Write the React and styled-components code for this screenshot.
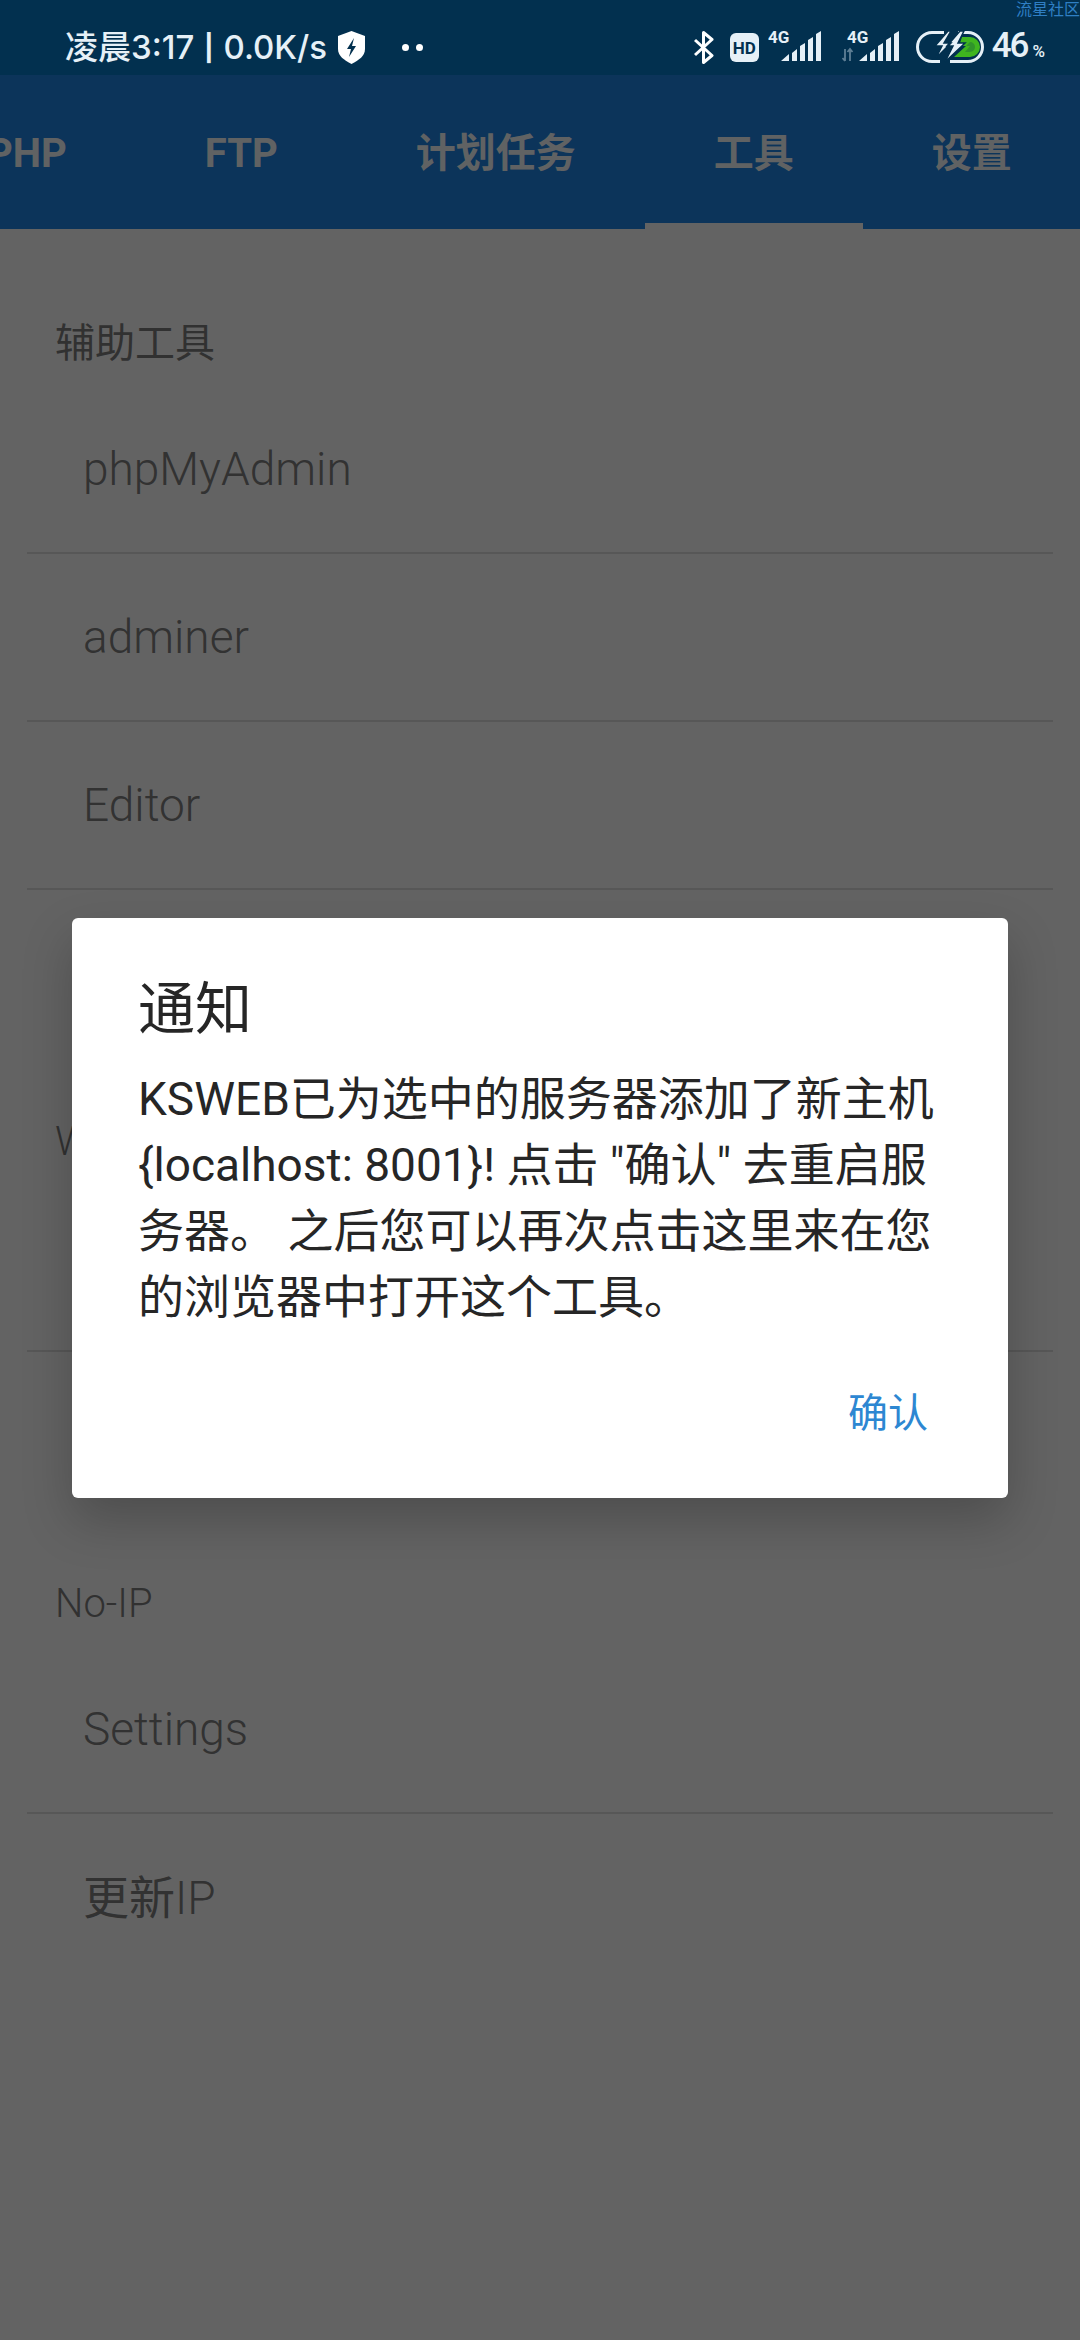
import React from 'react';
import styled, {createGlobalStyle} from 'styled-components';

const GlobalStyle = createGlobalStyle`
  html, body {
    margin: 0;
    padding: 0;
    background: #fff;
  }
  * {
    box-sizing: border-box;
  }
`;

const latin = `Roboto, "Noto Sans CJK SC", sans-serif`;

const Page = styled.div`
  position: relative;
  width: 1080px;
  height: 2340px;
  overflow: hidden;
  background: #fff;
  font-family: ${latin};
`;

const StatusBar = styled.div`
  height: 75px;
  background: #02304f;
  color: #e6f0f7;
  display: flex;
  align-items: center;
  justify-content: space-between;
  padding: 19px 35px 0 65px;
  position: relative;
  z-index: 3;
`;

const StatusLeft = styled.div`
  display: flex;
  align-items: center;
`;

const Clock = styled.span`
  font-family: Inter, "Noto Sans CJK SC", sans-serif;
  font-size: 33px;
  font-weight: 500;
  line-height: 40px;
  white-space: nowrap;
`;

const Separator = styled.span`
  font-size: 26px;
  font-weight: 700;
  margin: 0 1px;
  vertical-align: 2px;
`;

const ShieldIcon = styled.svg`
  width: 27px;
  height: 33px;
  margin-left: 11px;
`;

const Dots = styled.div`
  display: flex;
  gap: 7px;
  margin-left: 37px;

  i {
    width: 7px;
    height: 7px;
    border-radius: 50%;
    background: #fff;
  }
`;

const StatusRight = styled.div`
  display: flex;
  align-items: center;
`;

const Glyph = styled.svg`
  display: block;
  flex-shrink: 0;
  margin-left: ${(props) => props.$gap || 0}px;
`;

const Percent = styled.span`
  font-size: 35px;
  line-height: 40px;
  font-weight: 500;
  letter-spacing: -2px;
  margin-left: 8px;
  padding-top: 3px;
  white-space: nowrap;

  small {
    font-size: 17px;
    letter-spacing: 0;
    margin-left: 5px;
  }
`;

const Watermark = styled.span`
  position: absolute;
  top: 0;
  right: 0;
  font-family: "Noto Sans CJK SC", sans-serif;
  font-size: 16px;
  line-height: 16px;
  color: #2f7fc4;
  z-index: 4;
`;

const TabBar = styled.div`
  height: 154px;
  background: #2087e8;
  display: flex;
  overflow: hidden;
  white-space: nowrap;
`;

const TabStrip = styled.div`
  display: flex;
  margin-left: -82px;
  flex-shrink: 0;
`;

const Tab = styled.div`
  position: relative;
  flex-shrink: 0;
  display: flex;
  align-items: center;
  padding: 3px 69px 0;
  font-size: 40px;
  line-height: 56px;
  font-weight: 700;
  color: rgba(255, 255, 255, 0.98);

  &.active::after {
    content: '';
    position: absolute;
    left: 0;
    right: 0;
    bottom: 0;
    height: 6px;
    background: #fff;
  }
`;

const Content = styled.div`
  padding: 31px 27px 0;
`;

const Han = styled.span`
  font-weight: 400;
`;

const SectionTitle = styled.div`
  padding: 62px 0 20px 28px;
  font-size: 40px;
  line-height: 44px;
  font-weight: 300;
  color: #7f7f7f;
`;

const Row = styled.div`
  height: 168px;
  display: flex;
  align-items: center;
  padding-left: 56px;
  font-size: 46px;
  line-height: 56px;
  font-weight: 300;
  color: #808080;
  border-bottom: 2px solid #e0e0e0;

  &:last-child {
    border-bottom: none;
  }
`;

const Scrim = styled.div`
  position: absolute;
  top: 75px;
  left: 0;
  right: 0;
  bottom: 0;
  background: rgba(0, 0, 0, 0.61);
  display: flex;
  align-items: center;
  justify-content: center;
  z-index: 2;
`;

const Dialog = styled.div`
  width: 936px;
  height: 580px;
  background: #fff;
  border-radius: 6px;
  box-shadow: 0 22px 50px rgba(0, 0, 0, 0.22);
  padding: 55px 66px 0 66px;
  display: flex;
  flex-direction: column;
`;

const DialogTitle = styled.div`
  font-family: "Noto Sans CJK SC", sans-serif;
  font-size: 57px;
  line-height: 62px;
  color: #262626;
`;

const DialogBody = styled.div`
  margin-top: 31px;
  font-size: 46px;
  line-height: 66px;
  color: #262626;
  white-space: nowrap;
`;

const DialogActions = styled.div`
  margin-top: 52px;
  padding-right: 14px;
  display: flex;
  justify-content: flex-end;
`;

const ActionButton = styled.button`
  border: none;
  background: none;
  padding: 0;
  font-family: "Noto Sans CJK SC", sans-serif;
  font-size: 40px;
  line-height: 56px;
  color: #2d87d2;
`;

const sections = [
  {title: <Han>辅助工具</Han>, rows: ['phpMyAdmin', 'adminer', 'Editor', '']},
  {title: 'Web', rows: ['', '']},
  {
    title: 'No-IP',
    rows: [
      'Settings',
      <>
        <Han>更新</Han>IP
      </>,
    ],
  },
];

const tabs = ['PHP', 'FTP', '计划任务', '工具', '设置'];

const Signal = ({arrows, gap}) => (
  <Glyph $gap={gap} width={arrows ? 58 : 54} height="40" viewBox={`0 -3 ${arrows ? 58 : 54} 40`}>
    <text x={arrows ? 5 : 0} y="13" fontFamily="Roboto" fontWeight="700" fontSize="17" fill="#e6f0f7">
      4G
    </text>
    {arrows && (
      <path d="M3 19v12M0.5 28l2.5 3M8 31V19M5.5 22l2.5-3 2.500 3" stroke="#5f7f95" strokeWidth="1.8" fill="none" />
    )}
    <path
      transform={arrows ? 'translate(4 0)' : undefined}
      d="M13 31l8-7v7zM24 31v-8l5-4v12zM32 31V16l5-3v18zM40 31V10l5-3v24zM48 31V4l5-3v30z"
      fill="#e6f0f7"
    />
  </Glyph>
);

const App = () => (
  <Page>
    <GlobalStyle />
    <Watermark>流星社区</Watermark>
    <StatusBar>
      <StatusLeft>
        <Clock>
          凌晨3:17 <Separator>|</Separator> 0.0K/s
        </Clock>
        <ShieldIcon viewBox="0 0 27 33">
          <path d="M13.500 0L27 5v13c0 7-6 11-13.500 15C6 29 0 25 0 18V5z" fill="#fff" />
          <path d="M16 7l-7 11h4l-2 8 7-11h-4z" fill="#02304f" />
        </ShieldIcon>
        <Dots>
          <i />
          <i />
        </Dots>
      </StatusLeft>
      <StatusRight>
        <Glyph width="20" height="33" viewBox="0 0 20 33">
          <path d="M1 9l17 15.500-8.500 7V1.500L18 8.500 1 24" fill="none" stroke="#fff" strokeWidth="3" strokeLinejoin="round" />
        </Glyph>
        <Glyph $gap={16} width="29" height="29" viewBox="0 0 29 29">
          <rect width="29" height="29" rx="6" fill="#e6f0f7" />
          <text x="2.700" y="20.500" fontFamily="Roboto" fontWeight="700" fontSize="17" fill="#02304f">
            HD
          </text>
        </Glyph>
        <Signal gap={9} />
        <Signal arrows gap={20} />
        <Glyph $gap={16} width="68" height="32" viewBox="0 0 68 32">
          <path d="M28 1.500H16a14.500 14.500 0 0 0 0 29h8M42 1.500h10a14.500 14.500 0 0 1 0 29H34" fill="none" stroke="#e6f0f7" strokeWidth="3" />
          <path d="M46 6h8a10 10 0 0 1 0 20H38l12-11h-7z" fill="#3fb51f" />
          <path d="M54 11l-4 4h4l-5 6h5a5 5 0 0 0 0-10z" fill="#02304f" opacity="0.25" />
          <path
            d="M32 0L19 15h7l-6 12 15-15h-7l7-12zM44 0L31 15h6l-8 16 20-19h-7l6-12z"
            fill="#e6f0f7"
            stroke="#02304f"
            strokeWidth="1.500"
          />
        </Glyph>
        <Percent>
          46<small>%</small>
        </Percent>
      </StatusRight>
    </StatusBar>
    <TabBar>
      <TabStrip>
        {tabs.map((tab) => (
          <Tab key={tab} className={tab === '工具' ? 'active' : ''}>
            {tab}
          </Tab>
        ))}
      </TabStrip>
    </TabBar>
    <Content>
      {sections.map((section, index) => (
        <div key={index}>
          <SectionTitle>{section.title}</SectionTitle>
          <div>
            {section.rows.map((row, rowIndex) => (
              <Row key={rowIndex}>{row ? <span>{row}</span> : null}</Row>
            ))}
          </div>
        </div>
      ))}
    </Content>
    <Scrim>
      <Dialog>
        <DialogTitle>通知</DialogTitle>
        <DialogBody>
          KSWEB已为选中的服务器添加了新主机
          <br />
          {'{localhost: 8001}! 点击 "确认" 去重启服'}
          <br />
          务器。 之后您可以再次点击这里来在您
          <br />
          的浏览器中打开这个工具。
        </DialogBody>
        <DialogActions>
          <ActionButton>确认</ActionButton>
        </DialogActions>
      </Dialog>
    </Scrim>
  </Page>
);

export default App;
